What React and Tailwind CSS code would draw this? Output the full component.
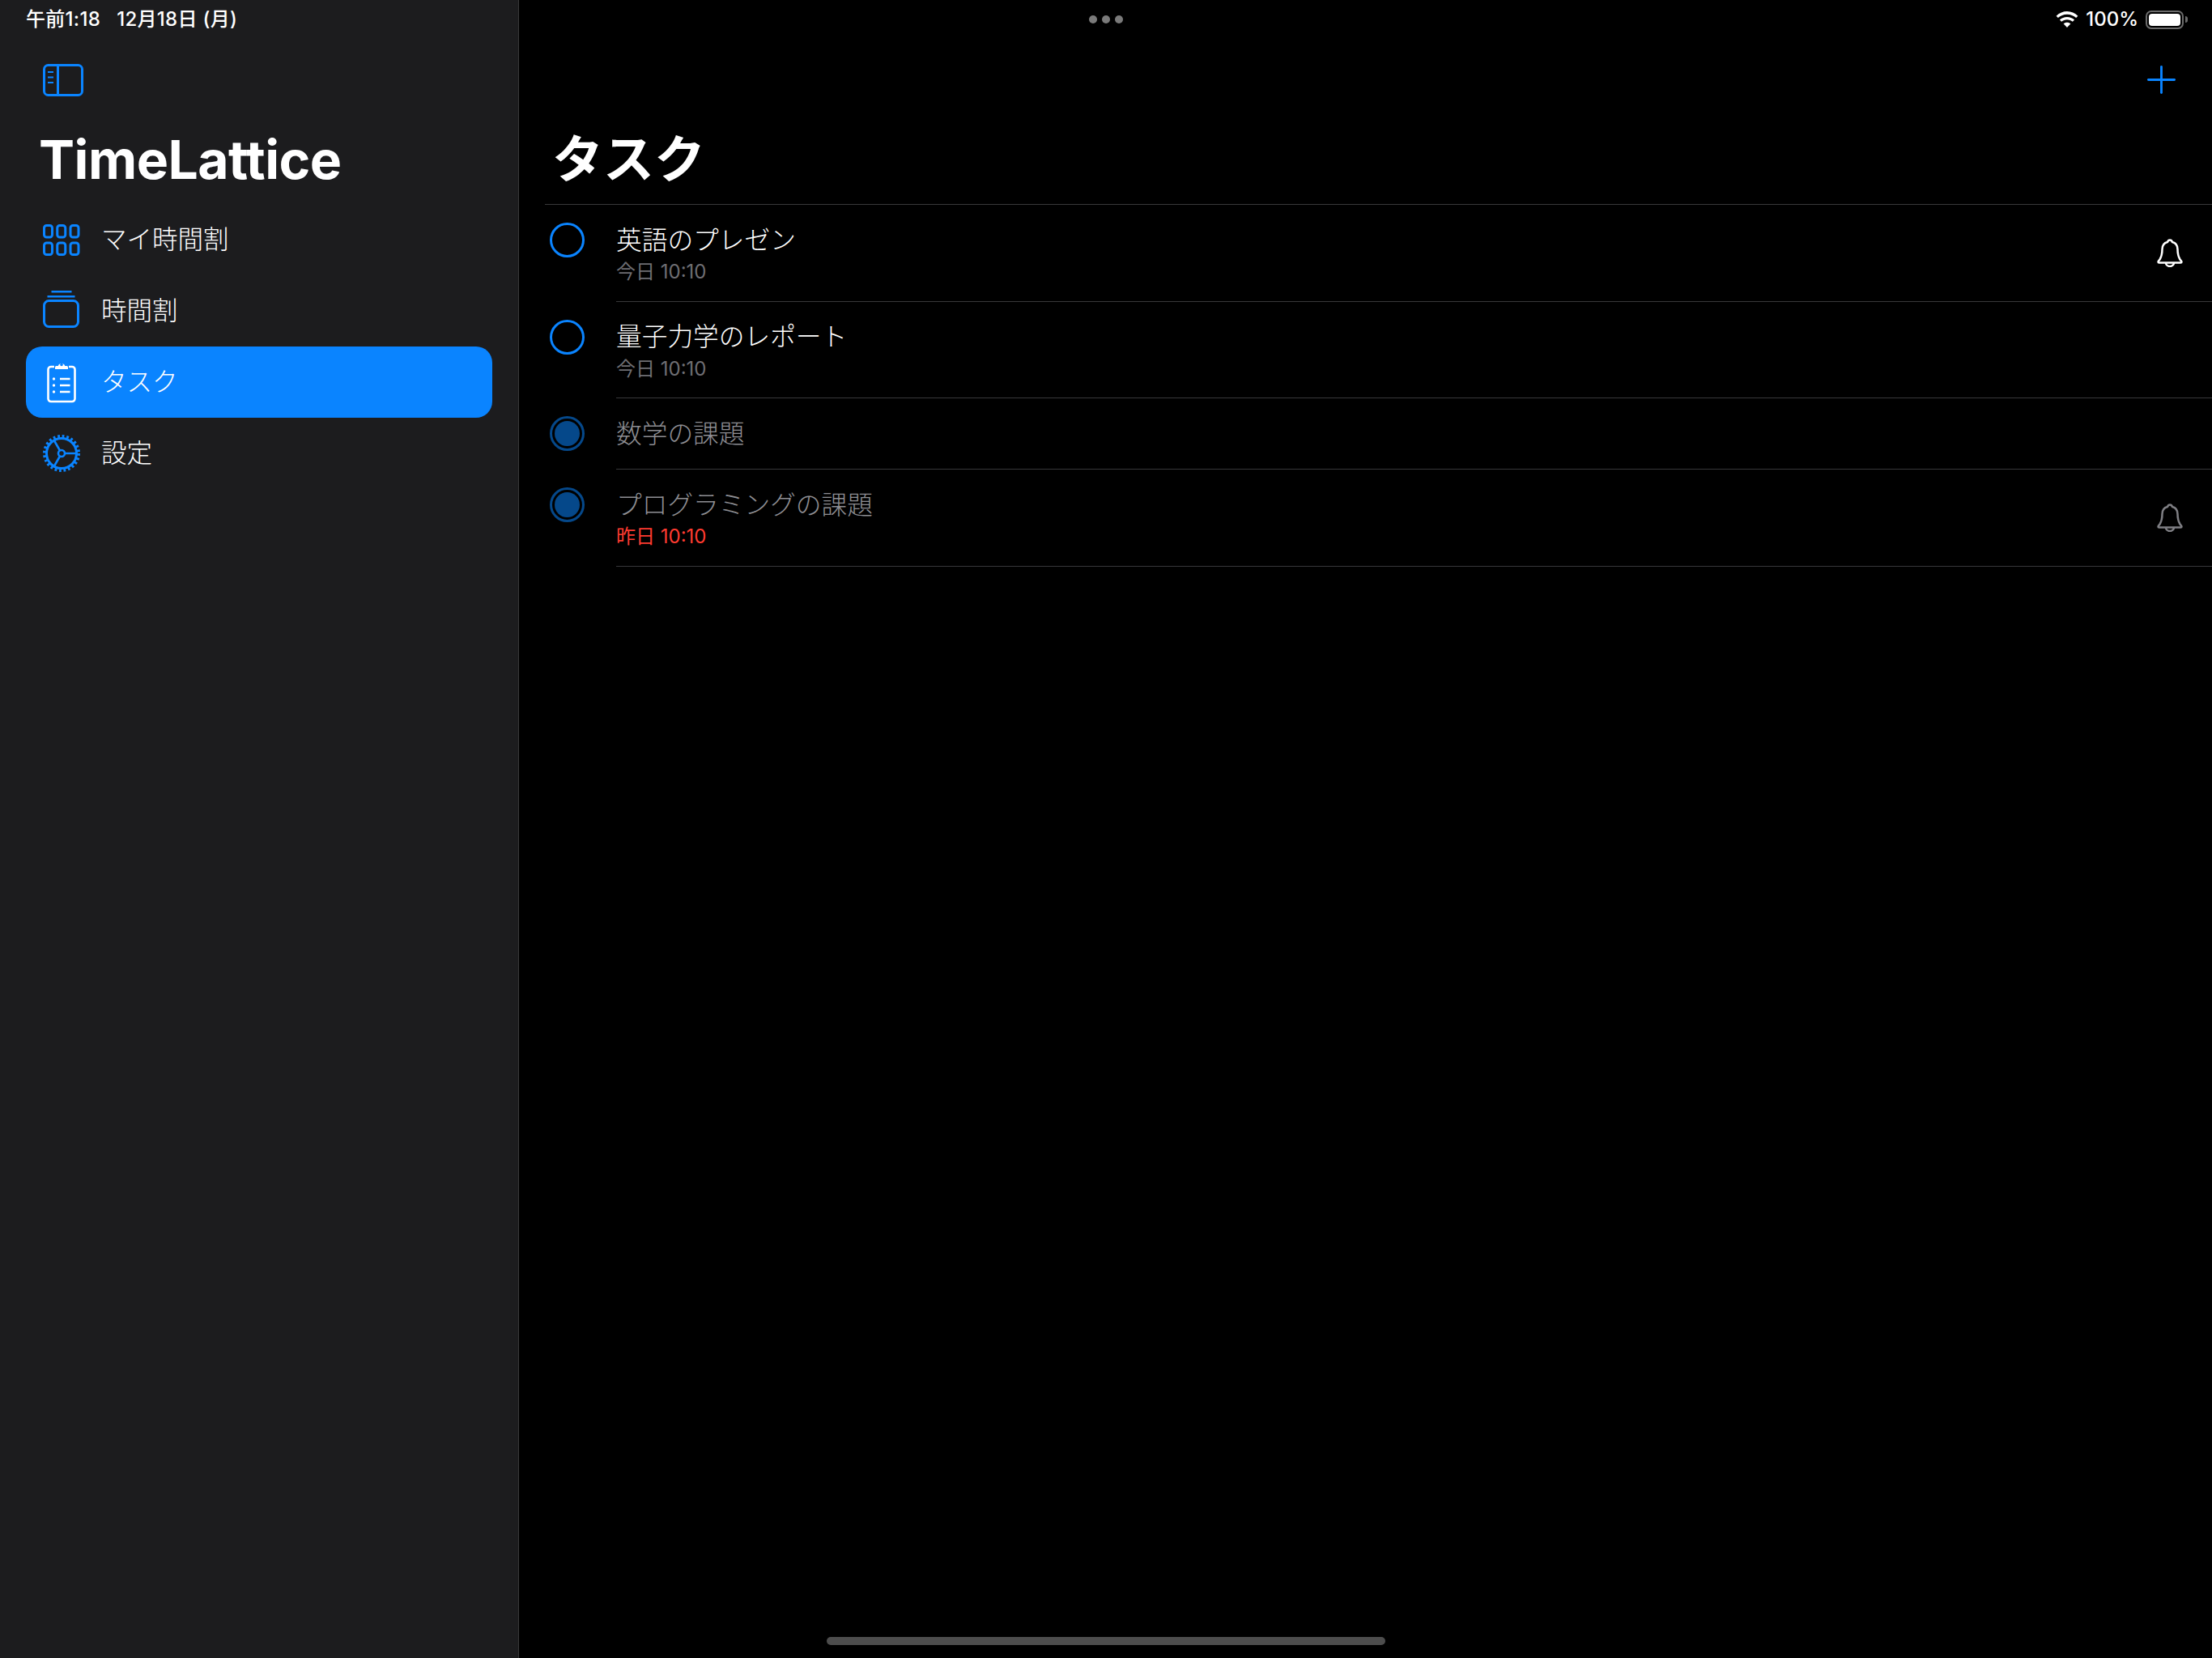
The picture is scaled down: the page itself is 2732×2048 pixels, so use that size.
import { Plus } from 'lucide-react';

const font = { fontFamily: 'Inter, "Noto Sans CJK JP", sans-serif' };

const SidebarToggleIcon = () => (
  <svg width="50" height="40" viewBox="0 0 50 40" fill="none" stroke="#0a84ff">
    <rect x="1.5" y="1.5" width="47" height="37" rx="5" strokeWidth="3" />
    <path d="M18.5 2v36" strokeWidth="3" />
    <path d="M6 10h7M6 16.5h7M6 23h7" strokeWidth="2" />
  </svg>
);

const GridIcon = () => (
  <svg width="46" height="39" viewBox="0 0 46 39" fill="none" stroke="#0a84ff" strokeWidth="3">
    <rect x="1.5" y="1.5" width="10" height="14.5" rx="3" />
    <rect x="17.75" y="1.5" width="10" height="14.5" rx="3" />
    <rect x="34" y="1.5" width="10" height="14.5" rx="3" />
    <rect x="1.5" y="23" width="10" height="14.5" rx="3" />
    <rect x="17.75" y="23" width="10" height="14.5" rx="3" />
    <rect x="34" y="23" width="10" height="14.5" rx="3" />
  </svg>
);

const StackIcon = () => (
  <svg width="46" height="46" viewBox="0 0 46 46" fill="none" stroke="#0a84ff">
    <rect x="1.5" y="12.5" width="42" height="32" rx="6" strokeWidth="3" />
    <path d="M5.5 7.25h34" strokeWidth="2.5" />
    <path d="M10.5 1.25h25" strokeWidth="2.5" />
  </svg>
);

const ClipboardIcon = () => (
  <svg width="36" height="54" viewBox="0 0 36 54" fill="none" stroke="#ffffff">
    <path d="M9 8H5a3.500 3.500 0 0 0-3.500 3.500v36A3.500 3.500 0 0 0 5 51h26a3.500 3.500 0 0 0 3.500-3.500v-36A3.500 3.500 0 0 0 31 8h-4" strokeWidth="2.600" />
    <path d="M10 11V8.500a1.500 1.500 0 0 1 1.500-1.500h2.300a4.500 4.500 0 0 1 8.400 0h2.300a1.500 1.500 0 0 1 1.500 1.500V11z" fill="#ffffff" stroke="none" />
    <circle cx="18" cy="5.500" r="1.800" fill="#0a84ff" stroke="none" />
    <path d="M16 23h12.500M16 31h12.500M16 39h12.500" strokeWidth="2.400" />
    <circle cx="8.500" cy="23" r="1.700" fill="#ffffff" stroke="none" />
    <circle cx="8.500" cy="31" r="1.700" fill="#ffffff" stroke="none" />
    <circle cx="8.500" cy="39" r="1.700" fill="#ffffff" stroke="none" />
  </svg>
);

const GearIcon = () => (
  <svg width="46" height="46" viewBox="0 0 46 46" fill="none" stroke="#0a84ff">
    <circle cx="23" cy="23" r="18.500" strokeWidth="3" />
    <circle cx="23" cy="23" r="21" strokeWidth="4" strokeDasharray="2.750 2.750" />
    <circle cx="23" cy="23" r="4" strokeWidth="2.600" />
    <path d="M27 23h15M21 19.500L13.500 6.500M21 26.500L13.500 39.500" strokeWidth="2.600" />
  </svg>
);

const BellIcon = ({ color }) => (
  <svg width="32" height="35" viewBox="0 0 32 35" fill="none" stroke={color} strokeWidth="2.500" strokeLinejoin="round">
    <path d="M16 1.500c-1.500 0-2.500 1-3 2.500C9 5 6.500 8.500 6.500 13c0 6.500-1.500 10-3 12.500-.8 1.200-2 2-2 3 0 .6.500 1 1.300 1h26.400c.8 0 1.300-.4 1.300-1 0-1-1.200-1.800-2-3-1.500-2.500-3-6-3-12.500 0-4.500-2.500-8-6.500-9-.5-1.500-1.500-2.500-3-2.500z" />
    <path d="M11 29.500a5 4.500 0 0 0 10 0" />
  </svg>
);

const WifiIcon = () => (
  <svg width="28" height="20" viewBox="2.200 1.300 23.600 17.600" fill="#ffffff">
    <path d="M14 4.500c3.800 0 7.200 1.500 9.800 3.900l2-2.100C22.600 3.200 18.500 1.300 14 1.300S5.400 3.200 2.200 6.300l2 2.100C6.800 6 10.200 4.500 14 4.500z" />
    <path d="M14 10.300c2.300 0 4.400.9 6 2.300l2-2.100c-2.100-1.900-4.900-3.100-8-3.100s-5.900 1.200-8 3.100l2 2.100c1.600-1.400 3.700-2.300 6-2.300z" />
    <path d="M14 13.300c-1.500 0-2.900.6-3.900 1.500l3.900 4.100 3.900-4.100c-1-.9-2.400-1.500-3.900-1.500z" />
  </svg>
);

const Battery = () => (
  <div className="flex items-center gap-[2px]">
    <div className="w-[47px] h-[23px] rounded-[7px] border-2 border-[#6b6b6b] p-[2px]">
      <div className="w-full h-full rounded-[4px] bg-white" />
    </div>
    <div className="w-[3px] h-[8px] rounded-r-sm bg-[#6b6b6b]" />
  </div>
);

const navItems = [
  { label: 'マイ時間割', icon: <GridIcon /> },
  { label: '時間割', icon: <div className="mb-[4px]"><StackIcon /></div> },
  { label: 'タスク', icon: <ClipboardIcon />, active: true },
  { label: '設定', icon: <GearIcon /> },
];

const tasks = [
  { title: '英語のプレゼン', sub: '今日 10:10', bell: true },
  { title: '量子力学のレポート', sub: '今日 10:10' },
  { title: '数学の課題', done: true },
  { title: 'プログラミングの課題', sub: '昨日 10:10', done: true, overdue: true, bell: true },
];

const TaskRow = ({ task }) => (
  <div className={`flex ${task.sub ? 'h-[119.5px]' : 'h-[88px]'}`}>
    <div className="w-[88px] flex pl-[6px]">
      {task.done ? (
        <div className="mt-[22px] w-[43px] h-[43px] rounded-full border-[3px] border-[#05488a] p-[3px]">
          <div className="w-full h-full rounded-full bg-[#05488a]" />
        </div>
      ) : (
        <div className="mt-[22px] w-[43px] h-[43px] rounded-full border-[3px] border-[#0a84ff]" />
      )}
    </div>
    <div className="flex-1 flex items-center justify-between border-b border-[#38383a] pr-[36px]">
      <div className="self-start">
        <div className={`mt-[22px] h-[43px] flex items-center text-[31.7px] font-light ${task.done ? 'text-[#8e8e93]' : 'text-white'}`}>
          {task.title}
        </div>
        {task.sub && (
          <div className={`mt-[6px] h-[24px] flex items-center text-[24px] ${task.overdue ? 'text-[#ff3b30]' : 'text-[#6e6e73]'}`}>
            {task.sub}
          </div>
        )}
      </div>
      {task.bell && <BellIcon color={task.done ? '#7f7f84' : '#ffffff'} />}
    </div>
  </div>
);

export default function App() {
  return (
    <div className="relative flex w-[2732px] h-[2048px] overflow-hidden bg-black text-white" style={font}>
      <aside className="w-[641px] shrink-0 border-r border-[#38383a] bg-[#1c1c1e] flex flex-col">
        <div className="h-[48px] flex items-center pl-[32px] text-[24px] tracking-[0.3px] font-medium">
          午前1:18&nbsp;&nbsp;&nbsp;12月18日 (月)
        </div>
        <div className="h-[78px] flex items-center pl-[53px] pt-[23px]">
          <SidebarToggleIcon />
        </div>
        <h2 className="h-[126px] pl-[48px] pt-[31px] text-[66px] leading-[80px] tracking-[-0.5px] font-bold">TimeLattice</h2>
        <nav className="flex flex-col mx-[32px]">
          {navItems.map((item) => (
            <div
              key={item.label}
              className={`h-[88px] flex items-center rounded-[20px] text-[31.5px] font-light ${item.active ? 'bg-[#0a84ff]' : ''}`}
            >
              <div className="w-[93px] flex justify-center pr-[5px]">{item.icon}</div>
              {item.label}
            </div>
          ))}
        </nav>
      </aside>

      <main className="flex-1 flex flex-col">
        <div className="h-[48px] flex items-center justify-end gap-[9px] pr-[30px] text-[24px] font-medium">
          <WifiIcon />
          <span>100%</span>
          <Battery />
        </div>
        <div className="h-[78px] flex items-center justify-end pr-[35px] pt-[23px]">
          <Plus size={55} color="#0a84ff" strokeWidth={1.25} />
        </div>
        <h1 className="h-[126px] pl-[41px] pt-[30px] text-[63px] leading-[80px] font-bold">タスク</h1>
        <div className="ml-[32px] border-t border-[#38383a]">
          {tasks.map((task) => (
            <TaskRow key={task.title} task={task} />
          ))}
        </div>
      </main>

      <div className="absolute top-[19px] left-[1345px] flex gap-[6px]">
        <span className="w-[10px] h-[10px] rounded-full bg-[#7a7a7a]" />
        <span className="w-[10px] h-[10px] rounded-full bg-[#7a7a7a]" />
        <span className="w-[10px] h-[10px] rounded-full bg-[#7a7a7a]" />
      </div>
      <div className="absolute left-[1021px] top-[2022px] w-[690px] h-[10px] rounded-full bg-[#4d4d4d]" />
    </div>
  );
}
